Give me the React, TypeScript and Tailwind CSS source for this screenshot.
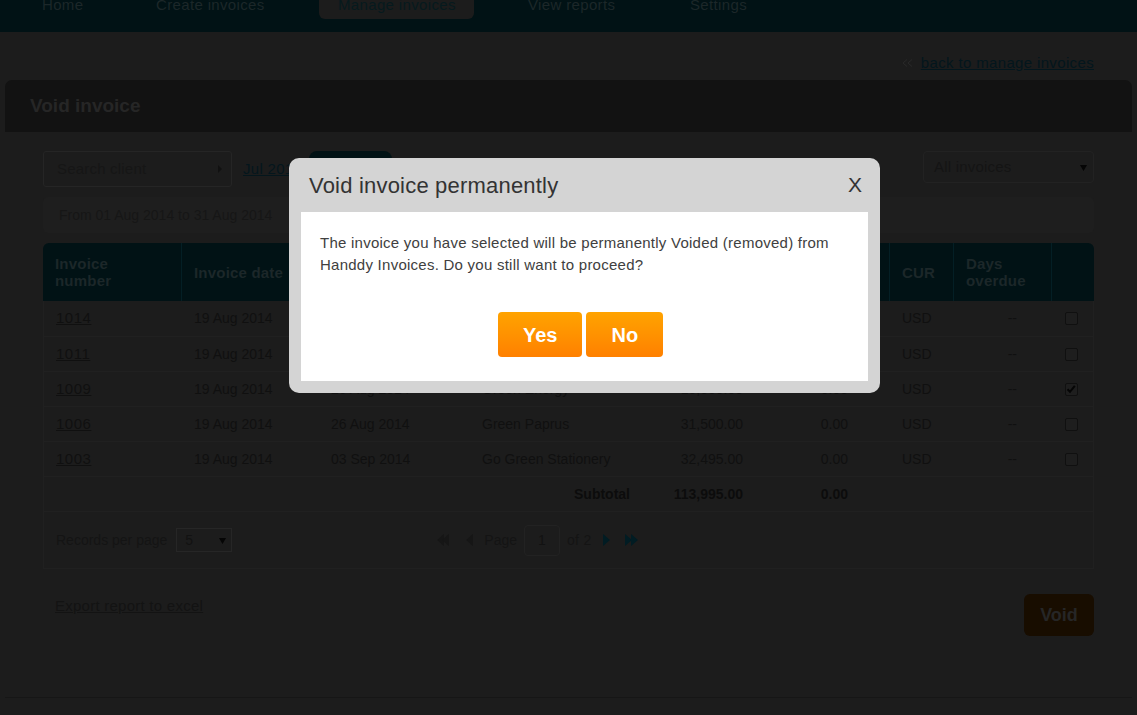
import React from "react";

const F = "font-['Liberation_Sans',Arial,sans-serif]";

const rows = [
  { no: "1014", date: "19 Aug 2014", due: "26 Aug 2014", client: "Blue Ocean Traders", amt: "20,000.00", paid: "0.00", checked: false },
  { no: "1011", date: "19 Aug 2014", due: "26 Aug 2014", client: "Handdy Solutions", amt: "15,000.00", paid: "0.00", checked: false },
  { no: "1009", date: "19 Aug 2014", due: "26 Aug 2014", client: "Green Energy", amt: "15,000.00", paid: "0.00", checked: true },
  { no: "1006", date: "19 Aug 2014", due: "26 Aug 2014", client: "Green Paprus", amt: "31,500.00", paid: "0.00", checked: false },
  { no: "1003", date: "19 Aug 2014", due: "03 Sep 2014", client: "Go Green Stationery", amt: "32,495.00", paid: "0.00", checked: false },
];

const headCols = "grid grid-cols-[138px_137px_151px_174px_113px_133px_64px_98px_41px]";
const bodyCols = "grid grid-cols-[137px_137px_151px_174px_113px_133px_64px_98px_40px]";

function Checkbox({ checked }: { checked: boolean }) {
  return (
    <div className="w-[13px] h-[13px] rounded-[2px] border border-[#101010] bg-[#1e1e1e] flex items-center justify-center">
      {checked && (
        <svg width="10" height="10" viewBox="0 0 10 10">
          <path d="M1.5 5.2 L4 7.8 L8.8 1.8" fill="none" stroke="#050505" strokeWidth="2" />
        </svg>
      )}
    </div>
  );
}

function Tri({ dir, color }: { dir: "l" | "r"; color: string }) {
  return (
    <svg width="7" height="12" viewBox="0 0 7 12">
      {dir === "r" ? <path d="M0 0 L7 6 L0 12 Z" fill={color} /> : <path d="M7 0 L0 6 L7 12 Z" fill={color} />}
    </svg>
  );
}

export default function App() {
  return (
    <div className={`${F} relative w-[1137px] min-h-[715px] bg-[#1c1c1c] overflow-hidden`}>
      {/* nav */}
      <nav className="h-[32px] bg-[#011215] flex items-start pl-[23px] text-[15px] tracking-[0.35px] text-[#1c2729]">
        <div className="w-[114px] pl-[19px] -mt-[4px] leading-[17px]">Home</div>
        <div className="w-[182px] pl-[19px] -mt-[4px] leading-[17px]">Create invoices</div>
        <div className="w-[155px] pl-[19px] -mt-[4px] pb-[6px] leading-[17px] bg-[#1c1c1c] rounded-b-[6px] text-[#061a1e]">
          Manage invoices
        </div>
        <div className="ml-[35px] w-[162px] pl-[19px] -mt-[4px] leading-[17px]">View reports</div>
        <div className="pl-[19px] -mt-[4px] leading-[17px]">Settings</div>
      </nav>

      {/* back link */}
      <div className="h-[48px] flex items-start justify-end pr-[43px] pt-[22px]">
        <div className="flex items-center gap-[8px] leading-[17px] text-[15px] tracking-[0.35px]">
          <svg width="11" height="8" viewBox="0 0 11 8" className="mt-[1px]">
            <path d="M5 0.5 L1 4 L5 7.5 M10 0.5 L6 4 L10 7.5" fill="none" stroke="#2a2a2a" strokeWidth="1" />
          </svg>
          <span className="underline text-[#03161d]">back to manage invoices</span>
        </div>
      </div>

      {/* main panel */}
      <div className="mx-[5px] w-[1127px]">
        <div className="h-[52px] bg-[#121212] rounded-t-[7px] flex items-center pl-[25px] text-[19px] font-bold text-[#262626]">
          Void invoice
        </div>

        <div className="px-[38px] pt-[19px] pb-[61px] border-b border-[#161616]">
          {/* filters */}
          <div className="flex items-start">
            <div className="w-[189px] h-[36px] rounded-[3px] border border-[#252525] flex items-center justify-between pl-[13px] pr-[9px] text-[15px] tracking-[0.2px] text-[#161616]">
              <span>Search client</span>
              <svg width="4" height="8" viewBox="0 0 4 8">
                <path d="M0 0 L4 4 L0 8 Z" fill="#111" />
              </svg>
            </div>
            <div className="ml-[11px] h-[36px] flex items-center text-[15px] tracking-[0.3px] underline text-[#04161c]">Jul 2014</div>
            <div className="ml-[7px] w-[83px] h-[36px] rounded-[8px] bg-[#011215] flex items-center justify-center text-[15px] font-bold text-[#1c2729]">
              Go
            </div>
            <div className="flex-1" />
            <div className="w-[171px] h-[32px] rounded-[4px] border border-[#222] flex items-center justify-between pl-[10px] pr-[6px] text-[15px] tracking-[0.2px] text-[#141414]">
              <span>All invoices</span>
              <svg width="7" height="7" viewBox="0 0 7 7">
                <path d="M0 1 L7 1 L3.5 7 Z" fill="#050505" />
              </svg>
            </div>
          </div>

          {/* date range */}
          <div className="mt-[10px] h-[36px] rounded-[5px] bg-[#1e1e1e] flex items-center pl-[16px] text-[14px] text-[#161616]">
            From 01 Aug 2014 to 31 Aug 2014
          </div>

          {/* table */}
          <div className="mt-[10px]">
            <div className={`${headCols} h-[58px] bg-[#011215] rounded-t-[6px] text-[15px] font-bold leading-[17px] tracking-[0.2px] text-[#1c2729]`}>
              <div className="flex items-center pl-[12px]">Invoice<br />number</div>
              <div className="flex items-center pl-[12px] border-l border-[#041f25]">Invoice date</div>
              <div className="flex items-center pl-[12px] border-l border-[#041f25]">Due date</div>
              <div className="flex items-center pl-[12px] border-l border-[#041f25]">Client</div>
              <div className="flex items-center justify-end pr-[12px] border-l border-[#041f25]">Amount</div>
              <div className="flex items-center justify-end pr-[12px] border-l border-[#041f25]">Balance</div>
              <div className="flex items-center pl-[12px] border-l border-[#041f25]">CUR</div>
              <div className="flex items-center pl-[12px] border-l border-[#041f25]">Days<br />overdue</div>
              <div className="border-l border-[#041f25]" />
            </div>
            <div className="border-x border-[#202020]">
              {rows.map((r) => (
                <div key={r.no} className={`${bodyCols} h-[35px] border-t border-[#202020] text-[14px] text-[#101010] first:border-t-0`}>
                  <div className="flex items-center pl-[12px] text-[15px] tracking-[0.5px] underline">{r.no}</div>
                  <div className="flex items-center pl-[13px]">{r.date}</div>
                  <div className="flex items-center pl-[13px]">{r.due}</div>
                  <div className="flex items-center pl-[13px]">{r.client}</div>
                  <div className="flex items-center justify-end pr-[13px]">{r.amt}</div>
                  <div className="flex items-center justify-end pr-[41px]">{r.paid}</div>
                  <div className="flex items-center pl-[13px]">USD</div>
                  <div className="flex items-center justify-end pr-[34px]">--</div>
                  <div className="flex items-center justify-center">
                    <Checkbox checked={r.checked} />
                  </div>
                </div>
              ))}
              <div className={`${bodyCols} h-[35px] border-t border-[#202020] text-[14px] font-bold text-[#0c0c0c]`}>
                <div />
                <div />
                <div />
                <div className="flex items-center justify-end pr-[13px]">Subtotal</div>
                <div className="flex items-center justify-end pr-[13px]">113,995.00</div>
                <div className="flex items-center justify-end pr-[41px]">0.00</div>
                <div />
                <div />
                <div />
              </div>
            </div>
            {/* pager */}
            <div className="h-[58px] border border-[#202020] flex items-center text-[14px] text-[#141414]">
              <span className="ml-[12px]">Records per page</span>
              <div className="ml-[9px] w-[56px] h-[24px] border border-[#262626] flex items-center justify-between pl-[8px] pr-[5px] text-[#121212]">
                <span>5</span>
                <svg width="7" height="7" viewBox="0 0 7 7">
                  <path d="M0 1 L7 1 L3.5 7 Z" fill="#050505" />
                </svg>
              </div>
              <div className="ml-[205px] flex items-center">
                <div className="flex">
                  <Tri dir="l" color="#161616" />
                  <div className="-ml-[2px]">
                    <Tri dir="l" color="#161616" />
                  </div>
                </div>
                <div className="ml-[17px]">
                  <Tri dir="l" color="#161616" />
                </div>
                <span className="ml-[11px]">Page</span>
                <div className="ml-[7px] w-[36px] h-[31px] rounded-[4px] border border-[#222] flex items-center justify-center text-[#121212]">1</div>
                <span className="ml-[7px] tracking-[0.3px]">of 2</span>
                <div className="ml-[11px]">
                  <Tri dir="r" color="#011c23" />
                </div>
                <div className="ml-[15px] flex">
                  <Tri dir="r" color="#011c23" />
                  <div className="-ml-[1px]">
                    <Tri dir="r" color="#011c23" />
                  </div>
                </div>
              </div>
            </div>
          </div>

          {/* bottom actions */}
          <div className="mt-[25px] flex items-start justify-between">
            <span className="ml-[12px] mt-[3px] leading-[17px] text-[15px] tracking-[0.25px] underline text-[#131313]">Export report to excel</span>
            <div className="w-[70px] h-[42px] rounded-[6px] bg-[#180d00] flex items-center justify-center text-[18px] font-bold text-[#262626]">
              Void
            </div>
          </div>
        </div>
      </div>

      {/* modal */}
      <div className="absolute left-[289px] top-[158px] w-[591px] rounded-[10px] bg-[#d4d4d4] px-[12px] pb-[12px] z-20">
        <div className="h-[54px] flex items-center justify-between pl-[8px] pr-[6px]">
          <span className="text-[22px] tracking-[0.2px] text-[#333333]">Void invoice permanently</span>
          <span className="font-['Liberation_Sans_Narrow','Liberation_Sans',sans-serif] text-[21px] text-[#333333]">X</span>
        </div>
        <div className="bg-white h-[169px] px-[19px] pt-[20px]">
          <p className="text-[15px] tracking-[0.25px] leading-[22px] text-[#404040]">
            The invoice you have selected will be permanently Voided (removed) from
            <br />
            Handdy Invoices. Do you still want to proceed?
          </p>
          <div className="mt-[36px] ml-[178px] flex gap-[4px]">
            <button className="h-[45px] px-[25px] rounded-[4px] bg-linear-to-b from-[#ffa300] to-[#ff8000] text-white font-bold text-[20px]">
              Yes
            </button>
            <button className="h-[45px] px-[25px] rounded-[4px] bg-linear-to-b from-[#ffa300] to-[#ff8000] text-white font-bold text-[20px]">
              No
            </button>
          </div>
        </div>
      </div>
    </div>
  );
}
